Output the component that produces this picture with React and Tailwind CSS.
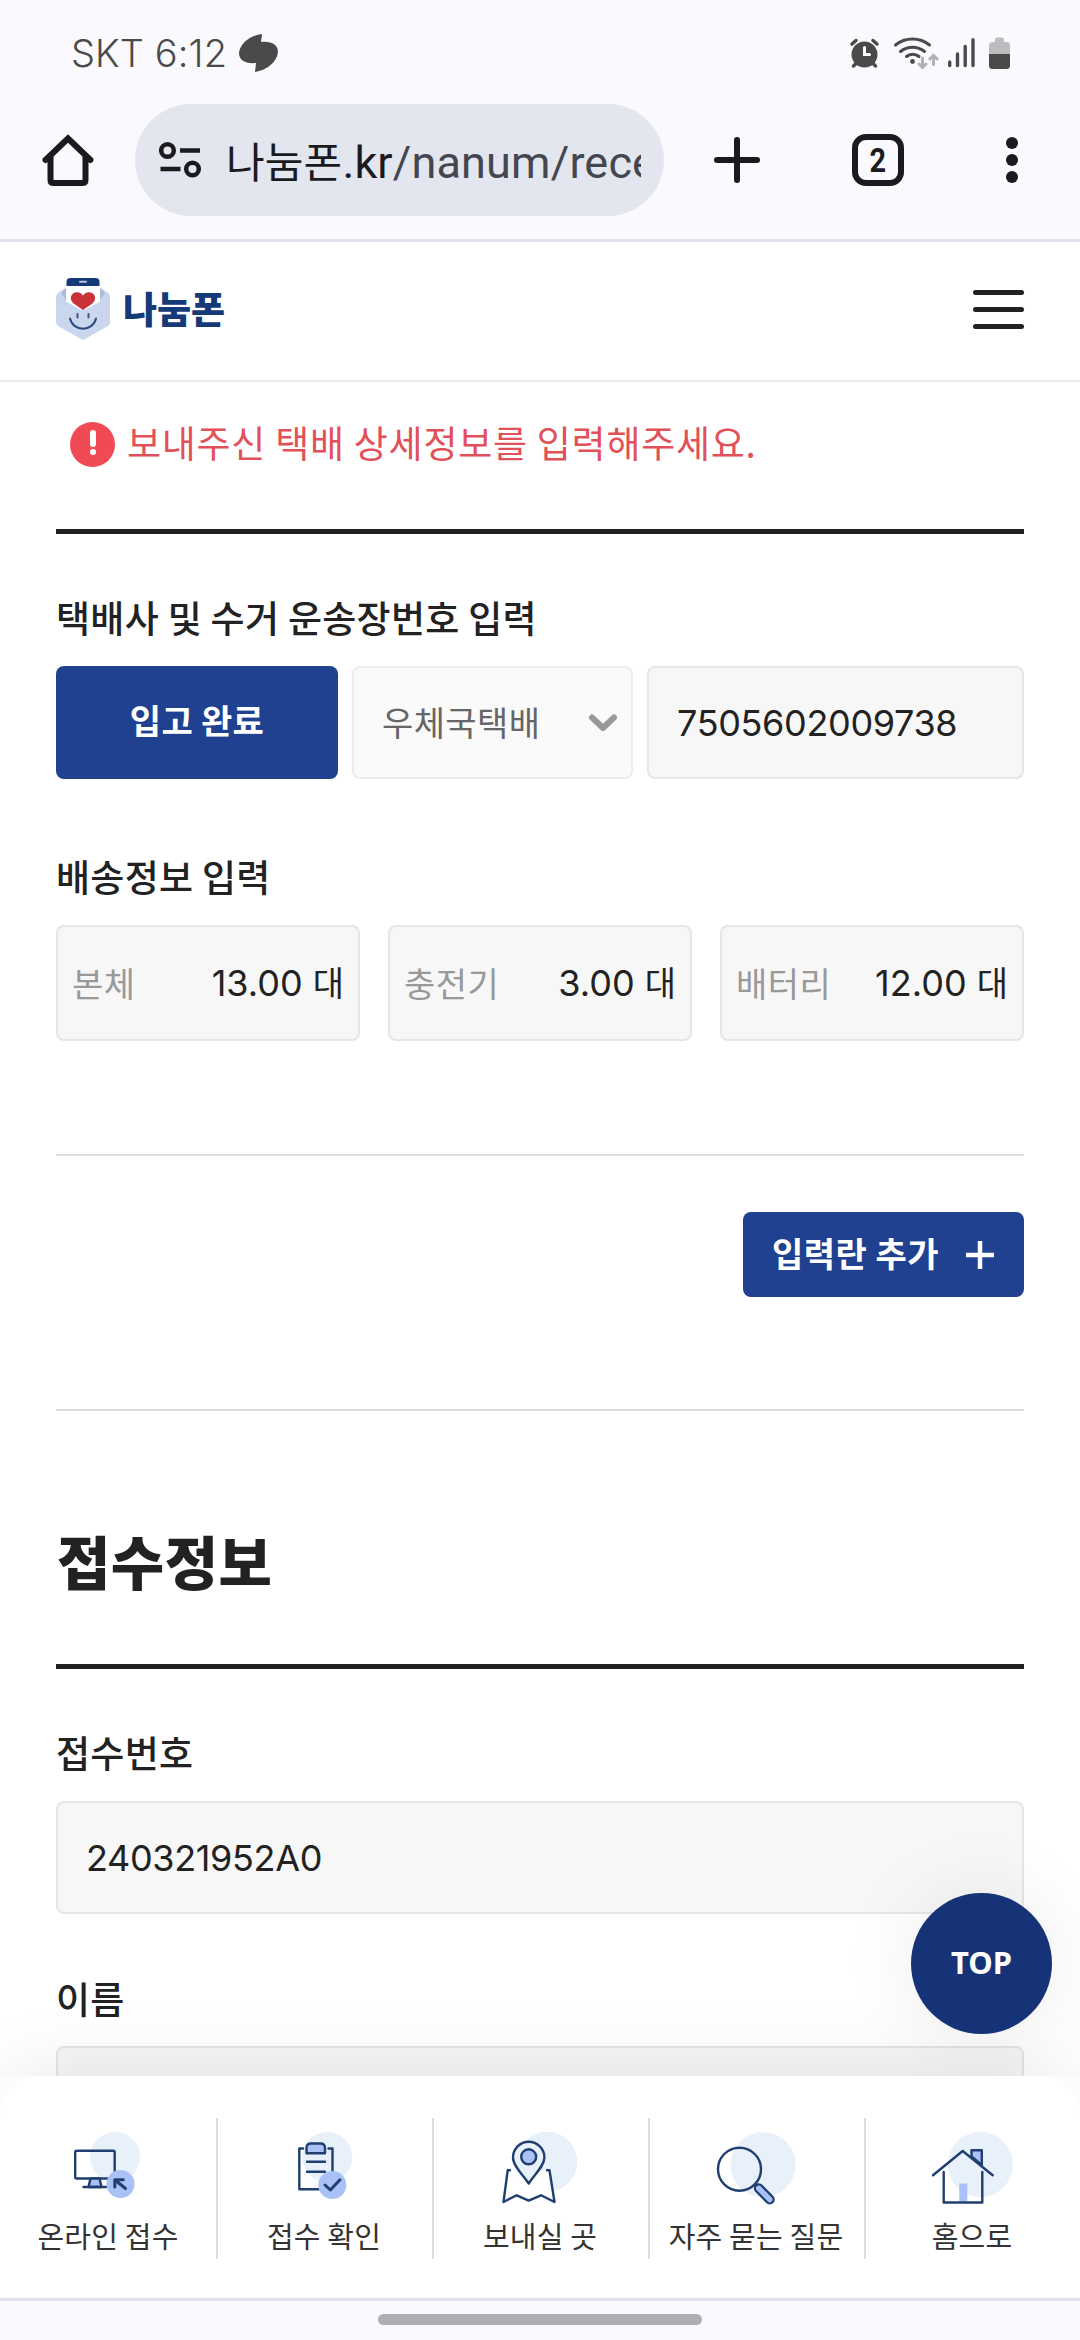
import React from "react";

const KR = "font-['Noto_Sans_CJK_KR',sans-serif]";
const NUM = "font-[Inter,'Noto_Sans_CJK_KR',sans-serif]";
const NAVY = "#1f3f70";
const SOFT = "#a9c1f6";
const PALE = "#e8f0fa";

function StatusBar() {
  return (
    <div className="flex h-[104px] items-start justify-between pl-[71px] pr-[69px]">
      <div className="flex items-center pt-[31px]">
        <span className="h-[44px] w-[168px] whitespace-nowrap font-[Inter,sans-serif] text-[38px] font-light leading-[44px] tracking-[0.1px] text-[#4a4a4a]">
          SKT 6:12
        </span>
        <svg width="40" height="38" viewBox="0 0 40 38" fill="#4a4a4a">
          <path d="M23 0 22 8C33 7 39 11 39 18 38 28 28 36 16 38L17 29C6 30 0 26 0 19 1 9 12 1 23 0Z" />
        </svg>
      </div>
      <svg className="mt-[35px]" width="162" height="36" viewBox="849 35 162 36" fill="none" stroke="#4a4a4a" strokeLinecap="round">
        <circle cx="864.5" cy="54.5" r="13" fill="#4a4a4a" stroke="none" />
        <path d="M852 44l4-3.5M877 44l-4-3.5M853.500 66l3-3M875.500 66l-3-3" strokeWidth="3.500" />
        <path d="M864.500 47.500v7h5" stroke="#faf9fe" strokeWidth="3" />
        <path d="M895.500 45a27 27 0 0 1 34 0M900.500 51.500a19 19 0 0 1 24 0M906.500 56.500a9.500 9.500 0 0 1 12.500 0" strokeWidth="3" />
        <circle cx="912.500" cy="61.500" r="2.400" fill="#4a4a4a" stroke="none" />
        <path d="M922.500 58v9M919 64l3.500 3.500 3.500-3.500M933.500 64.500v-9M929.800 59l3.700-3.700 3.700 3.700" stroke="#b2b2b5" strokeWidth="3" />
        <path d="M949.700 62v3.500M957.500 54v11.500M965.200 46.500v19M973 39.700v25.800" strokeWidth="3.400" />
        <path d="M995 39.500a2 2 0 0 1 2-2h5a2 2 0 0 1 2 2V42h2.500a3.500 3.500 0 0 1 3.500 3.500V54h-21v-8.500a3.500 3.500 0 0 1 3.500-3.500h2.500z" fill="#bdbdc0" stroke="none" />
        <path d="M989 54h21v11.500a3.500 3.500 0 0 1-3.500 3.500h-14a3.500 3.500 0 0 1-3.500-3.500z" fill="#4a4a4a" stroke="none" />
      </svg>
    </div>
  );
}

function BrowserBar() {
  return (
    <div className="flex h-[112px] items-center">
      <svg className="ml-[40px]" width="56" height="56" viewBox="0 0 56 56" fill="none" stroke="#1b1b1f" strokeWidth="6" strokeLinecap="round" strokeLinejoin="miter">
        <path d="M5.500 28 28 6.500 50.500 28" />
        <path d="M10.500 25v23q0 3 3 3h29q3 0 3-3V25" />
      </svg>
      <div className="ml-[39px] flex h-[112px] w-[529px] items-center rounded-full bg-[#e3e6ef] pl-[24px]">
        <svg className="shrink-0" width="44" height="38" viewBox="0 0 44 38" fill="none" stroke="#1b1b1f" strokeWidth="4.500">
          <circle cx="8.500" cy="9.500" r="6.300" />
          <path d="M21 9.500h20M1.500 28h20" />
          <circle cx="33.500" cy="28" r="6.300" />
        </svg>
        <div className="ml-[23px] mt-[5px] h-[64px] w-[415px] overflow-hidden whitespace-nowrap font-[Roboto,'Noto_Sans_CJK_KR',sans-serif] text-[45px] leading-[64px] tracking-[0.15px] text-[#444750]">
          <span className="text-[42px] text-[#1b1b1f]">나눔폰</span>
          <span className="text-[#1b1b1f]">.kr</span>/nanum/rece
        </div>
      </div>
      <svg className="ml-[48px]" width="50" height="50" viewBox="0 0 50 50" stroke="#1b1b1f" strokeWidth="6" strokeLinecap="round">
        <path d="M25 5v40M5 25h40" />
      </svg>
      <div className="ml-[90px] flex size-[52px] items-center justify-center rounded-[14px] border-[6px] border-[#1b1b1f] font-[Roboto,sans-serif] text-[34px] font-bold leading-none text-[#1b1b1f]">
        <span className="scale-x-[.85]">2</span>
      </div>
      <svg className="ml-[101px]" width="14" height="50" viewBox="0 0 14 50" fill="#1b1b1f">
        <circle cx="7" cy="8" r="6" />
        <circle cx="7" cy="25" r="6" />
        <circle cx="7" cy="42" r="6" />
      </svg>
    </div>
  );
}

function SiteHeader() {
  return (
    <header className="flex h-[140px] shrink-0 items-start justify-between border-b-2 border-[#e9e9e9] pl-14 pr-14">
      <div className="mt-[36px] flex items-center">
        <svg width="54" height="62" viewBox="0 0 54 62">
          <path d="M0 19Q0 16 3 14L27 0 51 14Q54 16 54 19V40H0Z" fill="#c9d6ee" />
          <path d="M10.500 9 5 15l5.500 8zM43.500 9 49 15l-5.500 8z" fill="#aebbd8" />
          <rect x="10" y="-2" width="34" height="34" fill="#fff" />
          <path d="M10.500 8V4q0-4 4-4h25q4 0 4 4v4z" fill="#163a78" />
          <rect x="23" y="2.800" width="8" height="2" rx="1" fill="#b9c6df" />
          <path d="M0 18 27 33 54 18V44Q54 47 51 48.500L29 61Q27 62.500 25 61L3 48.500Q0 47 0 44Z" fill="#c9d6ee" />
          <path d="M27 32 17.500 25.500C12 20 16 14 21 14.200 24 14.300 26 16 27 17.500 28 16 30 14.300 33 14.200 38 14 42 20 36.500 25.500Z" fill="#c93338" />
          <path d="M21.500 36v3.500M32.500 36v3.500" stroke="#3c5587" strokeWidth="2" strokeLinecap="round" />
          <path d="M14 40.500C17 54 37 54 40 40.500" fill="none" stroke="#2d4a80" strokeWidth="2" strokeLinecap="round" />
        </svg>
        <span className={`${KR} -mt-[3px] ml-[13px] whitespace-nowrap text-[37px] font-black leading-[48px] text-[#163a78]`}>나눔폰</span>
      </div>
      <div className="mt-[48px] flex w-[51px] flex-col gap-[12px]">
        <i className="h-[5px] rounded-full bg-[#222]" />
        <i className="h-[5px] rounded-full bg-[#222]" />
        <i className="h-[5px] rounded-full bg-[#222]" />
      </div>
    </header>
  );
}

function Label({ children, className }) {
  return (
    <div className={`${KR} h-[48px] whitespace-nowrap text-[37px] font-medium leading-[48px] tracking-[0.3px] text-[#222] ${className}`}>{children}</div>
  );
}

function CountBox({ name, value }) {
  return (
    <div className="flex h-[116px] w-[304px] items-center justify-between rounded-[8px] border-2 border-[#e6e6e6] bg-[#f7f7f7] pl-[14px] pr-[14px]">
      <span className={`${KR} text-[34px] leading-[48px] tracking-[0.5px] text-[#999]`}>{name}</span>
      <span className={`${NUM} whitespace-nowrap text-[36px] leading-[48px] text-[#222]`}>
        {value} <span className="text-[34px]">대</span>
      </span>
    </div>
  );
}

const navItems = [
  {
    label: "온라인 접수",
    icon: (
      <>
        <circle cx="115" cy="39" r="25" fill={PALE} stroke="none" />
        <rect x="75.200" y="32.800" width="39.500" height="27.700" rx="1.500" />
        <path d="M90.500 60.500h9l2 8.500h-13z" fill={SOFT} />
        <path d="M83.500 69h23" />
        <circle cx="120.500" cy="66" r="14" fill={SOFT} stroke="none" />
        <path d="M125.500 70.500 115 62M114.800 69v-7.300h8.500" strokeWidth="3" />
      </>
    ),
  },
  {
    label: "접수 확인",
    icon: (
      <>
        <circle cx="111.300" cy="39" r="25" fill={PALE} stroke="none" />
        <path d="M87 30.500h-3.700v40.800H104M112.500 30.500h4V54" />
        <path d="M90.500 35.300V30q0-4.500 4.500-4.500h9.500q4.500 0 4.500 4.500v5.300z" fill={SOFT} />
        <path d="M91 43.700h18M91 53.700h18" />
        <circle cx="116.300" cy="67" r="14" fill={SOFT} stroke="none" />
        <path d="m109 67 5.300 5L124 61.800" strokeWidth="3" />
      </>
    ),
  },
  {
    label: "보내실 곳",
    icon: (
      <>
        <circle cx="115.300" cy="43.700" r="30" fill={PALE} stroke="none" />
        <path
          d="M78 52.300h-2.300L71.500 84l13.200-6.700 12 5.300 12.300-5.300L122.500 84l-5-31.700"
          fill="#fff"
          stroke="none"
        />
        <path d="M96.700 65.500C91 57 81 48 81 39.500a15.700 15.700 0 0 1 31.400 0C112.400 48 102 57 96.700 65.500Z" fill={PALE} />
        <path d="M78 52.300h-2.300L71.500 84l13.200-6.700 12 5.300 12.300-5.300L122.500 84l-5-31.700H115" />
        <circle cx="96.700" cy="38.800" r="7.500" fill={SOFT} />
      </>
    ),
  },
  {
    label: "자주 묻는 질문",
    icon: (
      <>
        <circle cx="115" cy="46.700" r="32.500" fill={PALE} stroke="none" />
        <circle cx="91.500" cy="51.200" r="21.500" />
        <path d="m110.800 70.300 11 11.200" stroke={NAVY} strokeWidth="10" />
        <path d="m110.800 70.300 11 11.200" stroke={SOFT} strokeWidth="5.500" />
      </>
    ),
  },
  {
    label: "홈으로",
    icon: (
      <>
        <circle cx="116.300" cy="46.600" r="32.500" fill={PALE} stroke="none" />
        <rect x="95.300" y="65.500" width="8" height="18" fill={SOFT} stroke="none" />
        <path d="M107.500 38.500v-6.300h10.300V47z" fill={SOFT} />
        <path d="m69 57.200 29.700-24.200 30 24.200M79.700 54v30.500h38.600V54" />
      </>
    ),
  },
];

function BottomNav() {
  return (
    <nav className="h-[222px] shrink-0 bg-[#fcfcfc]">
      <div className="flex h-[222px] rounded-t-[40px] bg-white pt-[42px]">
        {navItems.map((item, i) => (
          <div key={item.label} className={`h-[141px] w-[216px] ${i ? "border-l-2 border-[#dcdcdc]" : ""}`}>
            <svg
              className={i ? "-ml-0.5 block" : "block"}
              width="216"
              height="95"
              viewBox="0 0 216 95"
              fill="none"
              stroke={NAVY}
              strokeWidth="2.400"
              strokeLinecap="round"
              strokeLinejoin="round"
            >
              <g>{item.icon}</g>
            </svg>
            <div className={`${KR} h-[44px] whitespace-nowrap text-center text-[29px] leading-[44px] tracking-[0.2px] text-[#333] ${i ? "-ml-0.5" : ""}`}>
              {item.label}
            </div>
          </div>
        ))}
      </div>
    </nav>
  );
}

export default function App() {
  return (
    <div className="flex h-[2340px] w-[1080px] flex-col overflow-hidden bg-white">
      <div className="h-[242px] shrink-0 border-b-[3px] border-[#e3e0ec] bg-[#faf9fe]">
        <StatusBar />
        <BrowserBar />
      </div>

      <div className="relative flex h-[1834px] shrink-0 flex-col overflow-hidden">
        <SiteHeader />
        <main className="px-14">
          <div className="mt-[40px] flex h-[45px] items-center pl-[14px]">
            <div className="flex size-[45px] flex-col items-center rounded-full bg-[#f04a54] pt-[8px]">
              <i className="h-[17px] w-[6px] rounded-full bg-white" />
              <i className="mt-[2px] size-[6px] rounded-full bg-white" />
            </div>
            <p className={`${KR} ml-[12px] whitespace-nowrap text-[37px] leading-[44px] tracking-[0.75px] text-[#e2505a] -mt-[6px]`}>
              보내주신 택배 상세정보를 입력해주세요.
            </p>
          </div>
          <div className="mt-[62px] h-[5px] bg-[#222]" />

          <Label className="mb-[25px] mt-[59px]">택배사 및 수거 운송장번호 입력</Label>
          <div className="flex h-[113px] gap-[14px]">
            <button className={`${KR} w-[282px] rounded-[8px] bg-[#1f418f] pb-[7px] text-[34px] font-bold tracking-[0.3px] text-white`}>입고 완료</button>
            <div className="flex w-[281px] items-center justify-between rounded-[8px] border-2 border-[#ededed] bg-[#fafafa] pl-[28px] pr-[13px]">
              <span className={`${KR} -mt-[2px] text-[34px] leading-[48px] tracking-[0.4px] text-[#666]`}>우체국택배</span>
              <svg width="30" height="20" viewBox="0 0 30 20" fill="none" stroke="#999" strokeWidth="6" strokeLinecap="round" strokeLinejoin="round">
                <path d="M4 4.500 15 15 26 4.500" />
              </svg>
            </div>
            <div className={`${NUM} flex w-[377px] items-center rounded-[8px] border-2 border-[#e6e6e6] bg-[#f7f7f7] pl-[28px] text-[36px] tracking-[-0.35px] text-[#222]`}>
              7505602009738
            </div>
          </div>

          <Label className="mb-[25px] mt-[73px]">배송정보 입력</Label>
          <div className="flex justify-between">
            <CountBox name="본체" value="13.00" />
            <CountBox name="충전기" value="3.00" />
            <CountBox name="배터리" value="12.00" />
          </div>

          <div className="mt-[113px] h-[2px] bg-[#ddd]" />
          <div className="mt-[56px] flex justify-end">
            <button className={`${KR} flex h-[85px] w-[281px] items-center justify-between rounded-[8px] bg-[#1f418f] pl-[29px] pr-[30px] text-[34px] font-bold text-white`}>
              <span className="-mt-[4px] whitespace-nowrap leading-[48px] tracking-[0.5px]">입력란 추가</span>
              <svg width="28" height="28" viewBox="0 0 28 28" stroke="#fff" strokeWidth="4.500">
                <path d="M14 0v28M0 14h28" />
              </svg>
            </button>
          </div>
          <div className="mt-[112px] h-[2px] bg-[#ddd]" />

          <h2 className={`${KR} mb-[64px] mt-[109px] h-[80px] pl-px text-[58px] font-black leading-[80px] tracking-[0.5px] text-[#222]`}>접수정보</h2>
          <div className="h-[5px] bg-[#222]" />

          <Label className="mb-[25px] mt-[59px]">접수번호</Label>
          <div className={`${NUM} flex h-[113px] items-center rounded-[8px] border-2 border-[#e6e6e6] bg-[#f7f7f7] pl-[28px] text-[36px] tracking-[-0.35px] text-[#222]`}>
            240321952A0
          </div>
          <Label className="mb-[24px] mt-[60px]">이름</Label>
          <div className="h-[113px] rounded-[8px] border-2 border-[#e6e6e6] bg-[#f7f7f7]" />
        </main>
        <div className="pointer-events-none absolute inset-x-0 top-full h-[222px] rounded-t-[40px] shadow-[0_0_80px_rgba(0,0,0,0.10)]" />
        <button className="absolute bottom-[42px] right-[28px] flex size-[141px] items-center justify-center rounded-full bg-[#163377] pb-[2px] font-['Noto_Sans',sans-serif] text-[31px] font-bold leading-none text-white shadow-[0_0_80px_rgba(0,0,0,0.08)]">
          TOP
        </button>
      </div>

      <BottomNav />
      <div className="flex h-[42px] shrink-0 justify-center border-t-[3px] border-[#e3e0ec] bg-[#faf9fe] pt-[13px]">
        <div className="h-[11px] w-[324px] rounded-full bg-[#aeaeb0]" />
      </div>
    </div>
  );
}
